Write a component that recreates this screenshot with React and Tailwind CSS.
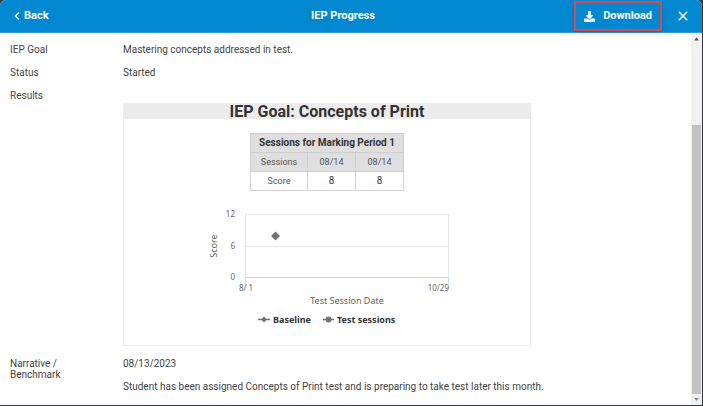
import React from 'react';
import { FaDownload } from 'react-icons/fa';

const SESSIONS = [
  { date: '08/14', score: 8 },
  { date: '08/14', score: 8 },
];

function Header() {
  return (
    <header className="grid grid-cols-3 items-center h-[33px] bg-[#0288d1] border-b border-[#2f9cd9] text-white text-[11px] font-bold">
      <button type="button" className="flex items-center gap-1 pl-3.5 justify-self-start">
        <svg viewBox="0 0 6 8" className="w-1.5 h-2" fill="none" stroke="currentColor" strokeWidth="1.5">
          <path d="M4.8 0.6L1.4 4L4.8 7.4" />
        </svg>
        Back
      </button>
      <h1 className="text-center -ml-4">IEP Progress</h1>
      <div className="flex items-center justify-end gap-3 pr-2.5">
        <button
          type="button"
          className="flex items-center gap-2 h-[30px] px-2 border-2 border-[#d84a52] shadow-md"
        >
          <FaDownload className="w-[11px] h-[11px]" />
          Download
        </button>
        <button type="button" aria-label="Close" className="p-1">
          <svg viewBox="0 0 10 10" className="w-2.5 h-2.5" fill="none" stroke="currentColor" strokeWidth="1.5">
            <path d="M0.8 0.8L9.2 9.2M9.2 0.8L0.8 9.2" />
          </svg>
        </button>
      </div>
    </header>
  );
}

function Row({ label, children }) {
  return (
    <div className="flex">
      <dt className="w-[113px] pr-10 shrink-0">{label}</dt>
      <dd className="flex-1 min-w-0">{children}</dd>
    </div>
  );
}

function SessionsTable() {
  return (
    <table className="mx-auto mt-3.5 border-collapse text-center text-[9px] leading-[18px] text-[#555] [&_th]:border [&_td]:border [&_th]:border-[#cfcfcf] [&_td]:border-[#d6d6d6] [&_th]:p-0 [&_td]:p-0">
      <thead className="bg-[#dfdfdf]">
        <tr>
          <th colSpan={3} className="text-[10px] font-bold text-[#333]">Sessions for Marking Period 1</th>
        </tr>
        <tr>
          <th className="w-[57px] font-normal">Sessions</th>
          {SESSIONS.map((s, i) => (
            <th key={i} className="w-[48px] font-normal">{s.date}</th>
          ))}
        </tr>
      </thead>
      <tbody>
        <tr>
          <td>Score</td>
          {SESSIONS.map((s, i) => (
            <td key={i} className="text-[10px] text-[#333]">{s.score}</td>
          ))}
        </tr>
      </tbody>
    </table>
  );
}

function ScoreChart() {
  return (
    <svg
      viewBox="0 0 260 124"
      className="block mx-auto mt-3 w-[260px] h-[124px] font-['Noto_Sans',sans-serif]"
      role="img"
      aria-label="Score by test session date"
    >
      <g fill="none" stroke="#e6e6e6">
        <path d="M48.5 11.5H251.5V73.5M48.5 11.5V73.5M48.5 43.5H251.5" />
        <path d="M48.5 81V74.5H251.5V81" stroke="#ccd6eb" />
      </g>

      <g fontSize="8" fill="#666" textAnchor="end">
        <text x="38" y="14">12</text>
        <text x="38" y="46">6</text>
        <text x="38" y="77">0</text>
        <text x="252" y="88">10/29</text>
      </g>
      <text x="49" y="88" fontSize="8" fill="#666" textAnchor="middle">8/ 1</text>
      <text transform="translate(20 43) rotate(-90)" fontSize="9" fill="#666" textAnchor="middle">Score</text>
      <text x="150" y="101" fontSize="9" fill="#666" textAnchor="middle">Test Session Date</text>

      <path d="M78.5 28.5L83 33L78.5 37.5L74 33Z" fill="#737373" />

      <path d="M61 116.5H73M126 116.5H137" stroke="#737373" strokeWidth="1.3" />
      <path d="M67 113.5L70 116.5L67 119.5L64 116.5Z" fill="#737373" />
      <circle cx="131.5" cy="116.5" r="3" fill="#737373" />
      <g fontSize="9" fontWeight="bold" fill="#333">
        <text x="76" y="120">Baseline</text>
        <text x="140" y="120">Test sessions</text>
      </g>
    </svg>
  );
}

function ResultsCard() {
  return (
    <section className="w-[408px] max-w-full border border-[#ececec] pb-[18px]">
      <h2 className="h-[15px] flex items-center justify-center bg-[#ececec] text-base font-bold text-[#333] whitespace-nowrap">
        IEP Goal: Concepts of Print
      </h2>
      <SessionsTable />
      <ScoreChart />
    </section>
  );
}

function Scrollbar() {
  return (
    <div aria-hidden="true" className="flex flex-col w-[11px] shrink-0 bg-[#f1f1f1]">
      <svg viewBox="0 0 11 11" className="w-[11px] h-[11px]">
        <path d="M3 7.5L5.5 4.5L8 7.5Z" fill="#505050" />
      </svg>
      <div className="flex-[81]" />
      <div className="flex-[268] mx-px bg-[#c1c1c1]" />
      <svg viewBox="0 0 11 11" className="w-[11px] h-[11px]">
        <path d="M3 4L5.5 7L8 4Z" fill="#8a8a8a" />
      </svg>
    </div>
  );
}

export default function App() {
  return (
    <div className="min-h-screen flex flex-col bg-[#35383d] pr-px pb-px font-['Roboto',sans-serif]">
      <div className="flex-1 flex flex-col bg-white rounded-t-md overflow-hidden">
        <Header />
        <div className="flex-1 flex">
          <main className="flex-1 min-w-0 px-2.5 pt-[11px] pb-2">
            <dl className="flex flex-col gap-3 text-[10px] leading-[11px] text-[#444]">
              <Row label="IEP Goal">Mastering concepts addressed in test.</Row>
              <Row label="Status">Started</Row>
              <Row label="Results">
                <div className="pt-[13px]">
                  <ResultsCard />
                </div>
              </Row>
              <Row label="Narrative / Benchmark">
                <p>08/13/2023</p>
                <p className="mt-3">
                  Student has been assigned Concepts of Print test and is preparing to take test later this month.
                </p>
              </Row>
            </dl>
          </main>
          <Scrollbar />
        </div>
      </div>
    </div>
  );
}
